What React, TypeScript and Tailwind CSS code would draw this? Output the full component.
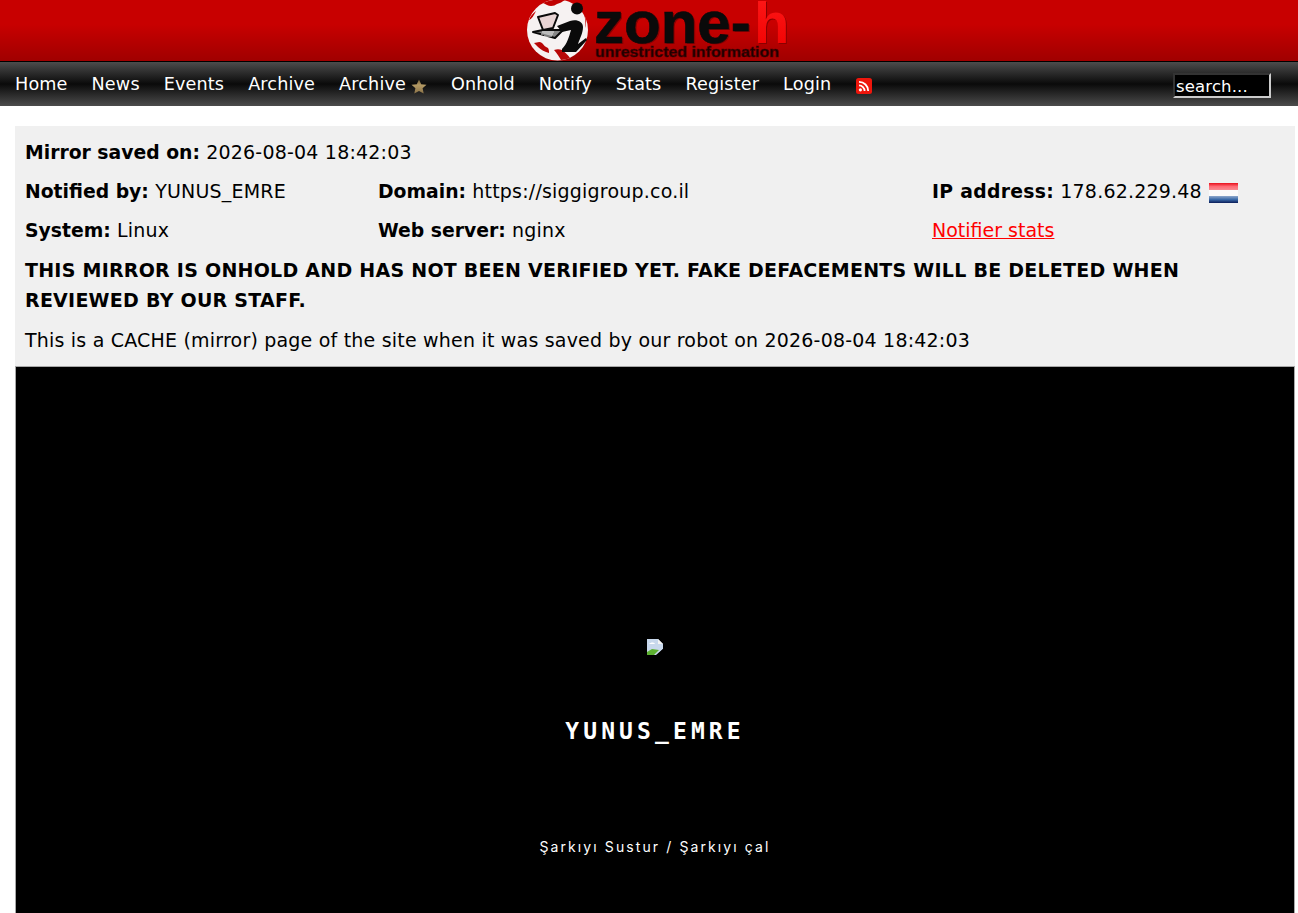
const navItems = ['Home', 'News', 'Events', 'Archive'];
const navItemsAfter = ['Onhold', 'Notify', 'Stats', 'Register', 'Login'];

function Logo() {
  return (
    <svg width="262" height="62" viewBox="0 0 262 62" className="block">
      <defs>
        <linearGradient id="zoneH" x1="0" y1="0" x2="0" y2="1">
          <stop offset="0" stopColor="#ff1a1a" />
          <stop offset="1" stopColor="#f00000" />
        </linearGradient>
      </defs>
      <circle cx="31.5" cy="30" r="30.5" fill="#f6f2f2" />
      <path d="M17 3c3 1 5 3 8 3 3 0 4-1 6-2 3-1 5-2 8-4-8-1-16 0-22 3z" fill="#c00000" />
      <path d="M8 43c3 0 5-2 8 0 2 2 3 4 6 5 1 2 1 3 1 5-4-1-8-3-11-6zM28 50c3 3 5 7 7 10 3 0 6-1 9-2-2-3-5-6-8-8-3-1-5-1-8 0z" fill="#b80808" />
      <path d="M3 20c3-1 5-5 7-9-4 3-6 6-7 9zM58 14c1 4 2 8 1 14 2-5 1-10-1-14zM55 42c2 0 3-2 4-4-1 3-2 5-4 7z" fill="#c00000" />
      <circle cx="51" cy="8.5" r="6" fill="#0a0a0a" />
      <path d="M31 26L44 21C50 19 57 21 57 27C57 33 54 38 52 44L60 38L61 40L50 52L36 52L36 49C41 44 43 37 45 30L36 32Z" fill="#0a0a0a" />
      <path d="M12 17L29 13L32 15L27 28L17 30Z" fill="#e8d4d4" stroke="#0a0a0a" strokeWidth="2" strokeLinejoin="round" />
      <path d="M7 32L17 30L37 30L29 38Z" fill="#888" stroke="#0a0a0a" strokeWidth="2" strokeLinejoin="round" />
      <path d="M16 32l12 0M15 34l12 0M18 36l8 0" stroke="#eee" strokeWidth="1" />
      <text x="69.5" y="44" fontFamily="'Liberation Sans', sans-serif" fontWeight="700" fontSize="60" fill="#8a0000">zone-</text>
      <text x="68" y="43" fontFamily="'Liberation Sans', sans-serif" fontWeight="700" fontSize="60" fill="#0a0a0a" stroke="#0a0a0a" strokeWidth="0.6">zone-</text>
      <text x="229" y="44" fontFamily="'Liberation Sans', sans-serif" fontWeight="700" fontSize="58" fill="#8a0000">h</text>
      <text x="228" y="43" fontFamily="'Liberation Sans', sans-serif" fontWeight="700" fontSize="58" fill="url(#zoneH)">h</text>
      <text x="69" y="57" fontFamily="'Liberation Sans', sans-serif" fontWeight="700" fontSize="15" textLength="184" lengthAdjust="spacingAndGlyphs" fill="#1a0000" stroke="#500000" strokeWidth="0.6">unrestricted information</text>
    </svg>
  );
}

function RssIcon() {
  return (
    <svg width="16" height="16" viewBox="0 0 16 16" className="ml-[1px] mt-[2px] block">
      <rect width="16" height="16" rx="2.5" fill="#ee160c" />
      <circle cx="4.4" cy="11.8" r="1.6" fill="#fff" />
      <path d="M3 7.4a5.6 5.6 0 0 1 5.6 5.6" fill="none" stroke="#fff" strokeWidth="1.8" />
      <path d="M3 3.8a9.2 9.2 0 0 1 9.2 9.2" fill="none" stroke="#fff" strokeWidth="1.8" />
    </svg>
  );
}

function StarIcon() {
  return (
    <svg width="16" height="15" viewBox="0 0 16 15" className="block">
      <defs>
        <linearGradient id="star" x1="0" y1="0" x2="0" y2="1">
          <stop offset="0" stopColor="#6e5c38" />
          <stop offset="0.4" stopColor="#b49a64" />
          <stop offset="1" stopColor="#8a7248" />
        </linearGradient>
      </defs>
      <path d="M8 .5l2.2 4.7 5.3.6-3.9 3.5 1.1 5.2L8 11.9l-4.7 2.6 1.1-5.2L.5 5.8l5.3-.6z" fill="url(#star)" />
    </svg>
  );
}

function FlagIcon() {
  return (
    <svg width="29" height="20" viewBox="0 0 29 20" className="mt-[4px] block">
      <defs>
        <linearGradient id="flagRed" x1="0" y1="0" x2="0" y2="1">
          <stop offset="0" stopColor="#e8101c" />
          <stop offset="0.5" stopColor="#ff6a74" />
          <stop offset="1" stopColor="#f88c92" />
        </linearGradient>
        <linearGradient id="flagBlue" x1="0" y1="0" x2="0" y2="1">
          <stop offset="0" stopColor="#8ea8cc" />
          <stop offset="0.5" stopColor="#3a6aa8" />
          <stop offset="1" stopColor="#0a1c58" />
        </linearGradient>
      </defs>
      <rect width="29" height="7" fill="url(#flagRed)" />
      <rect y="7" width="29" height="6" fill="#fafafa" />
      <rect y="13" width="29" height="7" fill="url(#flagBlue)" />
    </svg>
  );
}

function BrokenImage() {
  return (
    <svg width="16" height="16" viewBox="0 0 16 16" className="block">
      <path d="M0 0h11l5 5v5L9 16H0z" fill="#c8d8ec" />
      <path d="M11 0l5 5h-5z" fill="#f4f4f4" />
      <path d="M2 5c2-2 5-2 6 0H2z" fill="#fff" />
      <path d="M0 16v-3l5-3 7 1-5 5z" fill="#5cb030" />
      <path d="M16 10v6h-6z" fill="#000" />
    </svg>
  );
}

export default function App() {
  return (
    <div className="h-[913px] overflow-hidden bg-white font-['DejaVu_Sans',sans-serif] text-black">
      <header className="flex h-[62px] justify-center border-b border-black bg-gradient-to-b from-[#c80000] from-40% to-[#a00000]">
        <div className="ml-[16px]">
          <Logo />
        </div>
      </header>

      <nav className="flex h-[44px] items-center bg-[linear-gradient(to_bottom,#4c4c4c_0%,#0a0a0a_50%,#4c4c4c_100%)] pl-[15px] text-[17.6px] tracking-[0.15px] text-white">
        <div className="mt-[2px] flex items-center gap-[24px]">
          {navItems.map((item) => (
            <a key={item} href="#" className="leading-none">
              {item}
            </a>
          ))}
          <a href="#" className="flex items-center gap-[5px] leading-none">
            Archive
            <span className="mt-[2px]">
              <StarIcon />
            </span>
          </a>
          {navItemsAfter.map((item) => (
            <a key={item} href="#" className="leading-none">
              {item}
            </a>
          ))}
          <RssIcon />
        </div>
        <input
          defaultValue="search..."
          className="ml-auto mr-[27px] mt-[3px] h-[25px] w-[98px] border-2 border-t-[#333] border-r-[#ccc] border-b-[#ccc] border-l-[#333] bg-black pl-[1px] pt-[1px] text-[16.5px] text-white outline-none"
        />
      </nav>

      <main className="ml-[15px] mr-[3px] mt-[20px]">
        <section className="h-[240px] bg-[#f0f0f0] pl-[10px] pt-[14px] text-[19px] leading-[24px] tracking-[0.2px] [&_b]:text-[18.8px] [&_b]:leading-none [&_b]:tracking-normal">
          <p>
            <b>Mirror saved on:</b> 2026-08-04 18:42:03
          </p>
          <div className="mt-[15px] grid grid-cols-[353px_554px_1fr] gap-y-[15px]">
            <p>
              <b>Notified by:</b> YUNUS_EMRE
            </p>
            <p>
              <b>Domain:</b> https://siggigroup.co.il
            </p>
            <p className="flex items-center gap-[7px]">
              <span>
                <b className="!tracking-[0.3px]">IP address:</b> 178.62.229.48
              </span>
              <FlagIcon />
            </p>
            <p>
              <b>System:</b> Linux
            </p>
            <p>
              <b>Web server:</b> nginx
            </p>
            <a href="#" className="tracking-[0px] text-[#ff0000] underline">
              Notifier stats
            </a>
          </div>
          <p className="mt-[13px] pr-[60px] font-bold leading-[30px] tracking-[0.25px]">
            THIS MIRROR IS ONHOLD AND HAS NOT BEEN VERIFIED YET. FAKE DEFACEMENTS WILL BE DELETED WHEN REVIEWED BY OUR STAFF.
          </p>
          <p className="mt-[13px]">This is a CACHE (mirror) page of the site when it was saved by our robot on 2026-08-04 18:42:03</p>
        </section>

        <section className="flex h-[560px] flex-col items-center border border-[#a8a8a8] bg-black pt-[272px] text-white">
          <BrokenImage />
          <h1 className="mt-[61px] font-['DejaVu_Sans_Mono',monospace] text-[23px] font-bold leading-[30px] tracking-[4.1px]">YUNUS_EMRE</h1>
          <p className="mt-[91px] font-['Inter',sans-serif] text-[14px] leading-[20px] tracking-[2.1px]">Şarkıyı Sustur / Şarkıyı çal</p>
        </section>
      </main>
    </div>
  );
}
